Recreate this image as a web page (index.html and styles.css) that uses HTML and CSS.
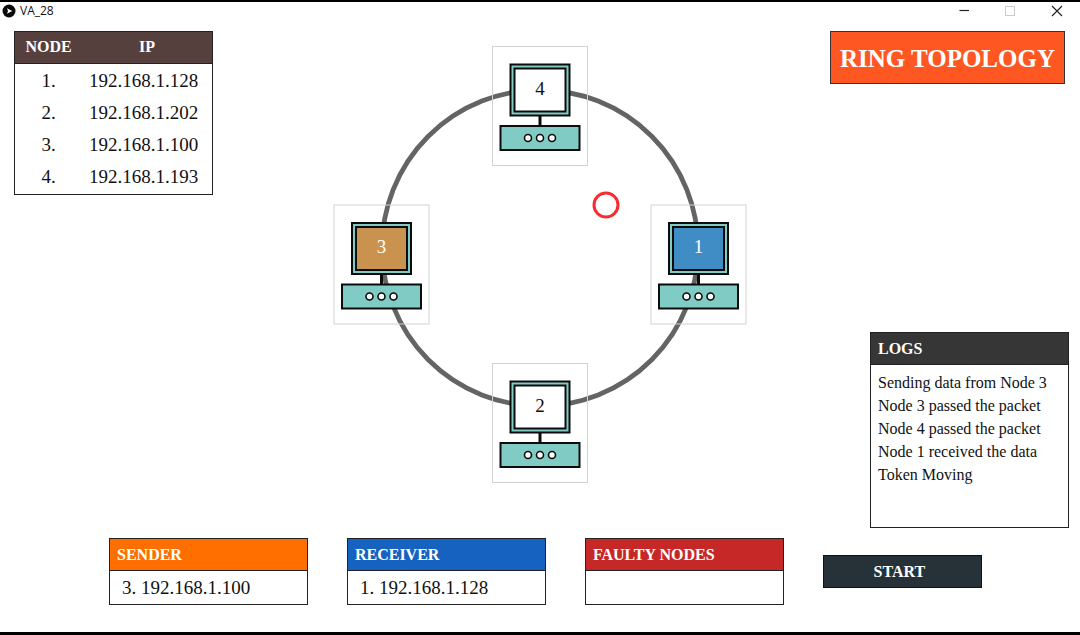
FILE: index.html
```html
<!DOCTYPE html>
<html lang="en">
<head>
<meta charset="utf-8">
<meta name="viewport" content="width=device-width, initial-scale=1">
<title>VA_28</title>
<link rel="stylesheet" href="styles.css">
</head>
<body>
<div class="window">
  <header class="titlebar">
    <svg class="app-icon" viewBox="0 0 14 14" aria-hidden="true">
      <circle cx="7" cy="7" r="6.5" fill="#0a0a0a"/>
      <path d="M5 4.2 L10.2 7 L5 9.8 L6 7 Z" fill="#fff"/>
    </svg>
    <span class="app-name">VA_28</span>
    <button class="win-btn" type="button" aria-label="Minimize">
      <svg viewBox="0 0 12 12"><path d="M0.5 5.5H10" stroke="#222" stroke-width="1.2"/></svg>
    </button>
    <button class="win-btn" type="button" aria-label="Maximize" disabled>
      <svg viewBox="0 0 12 12"><rect x="0.5" y="1.5" width="9" height="9" fill="none" stroke="#ccc"/></svg>
    </button>
    <button class="win-btn" type="button" aria-label="Close">
      <svg viewBox="0 0 12 12"><path d="M1 1L11 11M11 1L1 11" stroke="#222" stroke-width="1.2"/></svg>
    </button>
  </header>

  <main class="workspace">
    <table class="node-table">
      <thead>
        <tr><th scope="col" class="col-node">NODE</th><th scope="col">IP</th></tr>
      </thead>
      <tbody>
        <tr><td class="num">1.</td><td class="ip">192.168.1.128</td></tr>
        <tr><td class="num">2.</td><td class="ip">192.168.1.202</td></tr>
        <tr><td class="num">3.</td><td class="ip">192.168.1.100</td></tr>
        <tr><td class="num">4.</td><td class="ip">192.168.1.193</td></tr>
      </tbody>
    </table>

    <svg class="ring" viewBox="332 45 416 440" role="img" aria-label="Ring of four nodes">
      <defs>
        <g id="computer" stroke="#0c0c0c">
          <rect x="-47.5" y="-59.5" width="95" height="119" fill="none" stroke="#d2d2d2"/>
          <rect x="-29.5" y="-41.5" width="59" height="51" fill="#80cbc4" stroke-width="2"/>
          <rect x="-25.5" y="-37.5" width="51" height="43" stroke-width="2"/>
          <path d="M0 10V20" stroke-width="3"/>
          <rect x="-39.5" y="20" width="79" height="24" fill="#80cbc4" stroke-width="2"/>
          <g fill="#fff" stroke-width="1.6">
            <circle cx="-12" cy="32" r="3.5"/>
            <circle cx="0" cy="32" r="3.5"/>
            <circle cx="12" cy="32" r="3.5"/>
          </g>
        </g>
      </defs>
      <circle cx="540" cy="248" r="158" fill="none" stroke="#646464" stroke-width="4.8"/>
      <circle cx="606" cy="205" r="12" fill="none" stroke="#f82c30" stroke-width="3"/>
      <g class="node idle" transform="translate(540 106)">
        <use href="#computer"/><text y="-11">4</text>
      </g>
      <g class="node receiver" transform="translate(698.5 264.5)">
        <use href="#computer"/><text y="-12">1</text>
      </g>
      <g class="node idle" transform="translate(540 423)">
        <use href="#computer"/><text y="-11">2</text>
      </g>
      <g class="node sender" transform="translate(381.5 264.5)">
        <use href="#computer"/><text y="-12">3</text>
      </g>
    </svg>

    <div class="side">
      <h1 class="heading">RING TOPOLOGY</h1>
      <section class="panel logs">
        <h2 class="panel-title">LOGS</h2>
        <ul class="log-list">
          <li>Sending data from Node 3</li>
          <li>Node 3 passed the packet</li>
          <li>Node 4 passed the packet</li>
          <li>Node 1 received the data</li>
          <li>Token Moving</li>
        </ul>
      </section>
    </div>
  </main>

  <footer class="status">
    <section class="panel sender-panel">
      <h2 class="panel-title">SENDER</h2>
      <p class="value">3. 192.168.1.100</p>
    </section>
    <section class="panel receiver-panel">
      <h2 class="panel-title">RECEIVER</h2>
      <p class="value">1. 192.168.1.128</p>
    </section>
    <section class="panel faulty-panel">
      <h2 class="panel-title">FAULTY NODES</h2>
      <p class="value"></p>
    </section>
    <button class="start" type="button">START</button>
  </footer>
</div>
</body>
</html>
```

FILE: styles.css
```css
* {
  box-sizing: border-box;
}

body {
  margin: 0;
  background: #fff;
  color: #111;
  font-family: "Liberation Serif", "Times New Roman", serif;
  font-size: 16px;
}

h1, h2, p, ul {
  margin: 0;
  padding: 0;
}

.window {
  display: flex;
  flex-direction: column;
  min-height: 100vh;
  border-top: 2px solid #000;
  border-bottom: 3px solid #000;
}

/* Title bar */
.titlebar {
  display: flex;
  align-items: center;
  height: 18px;
  padding-left: 2px;
}

.app-icon {
  width: 14px;
  height: 14px;
}

.app-name {
  margin: 0 auto 0 4px;
  font-family: "Open Sans", "Noto Sans", sans-serif;
  font-size: 12px;
  line-height: 18px;
}

.win-btn {
  display: flex;
  align-items: center;
  justify-content: center;
  width: 46px;
  height: 18px;
  padding: 0;
  border: 0;
  background: none;
}

.win-btn svg {
  width: 12px;
  height: 12px;
}

/* Main area */
.workspace {
  flex: 1;
  display: grid;
  grid-template-columns: 1fr auto 1fr;
  padding: 11px 11px 0;
}

.node-table {
  width: 199px;
  margin-left: 3px;
  align-self: start;
  border: 1px solid #222;
  border-spacing: 0;
  padding-bottom: 2px;
}

.node-table th {
  height: 32px;
  padding: 0 0 2px;
  border-bottom: 1px solid #222;
  background: #56403d;
  color: #fff;
}

.node-table .col-node {
  width: 67px;
}

.node-table td {
  height: 32px;
  padding: 2px 0 0;
  font-size: 19px;
}

.node-table .num {
  text-align: center;
}

.node-table .ip {
  padding-left: 7px;
}

.ring {
  width: 416px;
  height: 440px;
  margin-top: 14px;
}

.node text {
  font-size: 19px;
  text-anchor: middle;
  fill: #111;
}

.idle { fill: #fff; }
.receiver { fill: #3f8dc4; }
.sender { fill: #c9924e; }

.receiver text,
.sender text {
  fill: #fff;
}

.side {
  display: flex;
  flex-direction: column;
  justify-content: space-between;
  align-items: flex-end;
}

.heading {
  margin-right: 4px;
  padding: 2px 9px 0;
  border: 1px solid #333;
  background: #ff5722;
  color: #fff;
  font-size: 25px;
  line-height: 49px;
  white-space: nowrap;
}

/* Panels */
.panel {
  border: 1px solid #222;
}

.panel-title {
  padding: 0 7px;
  border-bottom: 1px solid #222;
  color: #fff;
  font-size: 16px;
  line-height: 31px;
}

.logs {
  width: 199px;
}

.logs .panel-title {
  background: #363636;
}

.log-list {
  min-height: 162px;
  padding: 6px 7px;
  line-height: 23px;
  list-style: none;
}

.status {
  display: grid;
  grid-template-columns: 5fr 5fr 5fr 4fr;
  align-items: center;
  gap: 39px;
  padding: 10px 98px 27px 109px;
}

.status .panel-title {
  padding-top: 1px;
  line-height: 30px;
}

.value {
  min-height: 33px;
  padding: 0 12px;
  font-size: 19px;
  line-height: 33px;
}

.sender-panel .panel-title { background: #ff6f00; }
.receiver-panel .panel-title { background: #1662c0; }
.faulty-panel .panel-title { background: #c62828; }

.start {
  height: 33px;
  padding: 0 6px 0 0;
  border: 1px solid #111;
  background: #263238;
  color: #fff;
  font: bold 16px "Liberation Serif", "Times New Roman", serif;
}
```
